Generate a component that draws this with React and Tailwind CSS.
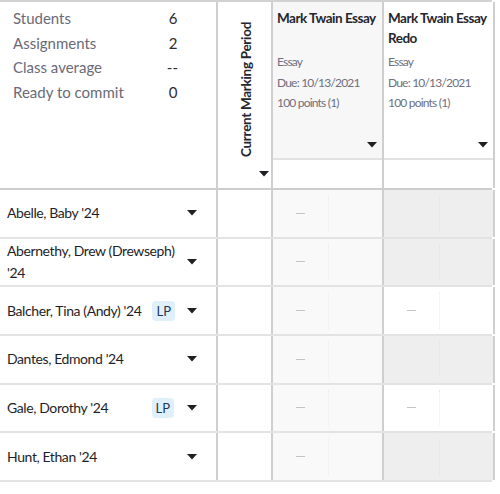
import React from "react";

const Caret = ({ className = "" }) => (
  <svg width="10" height="6" viewBox="0 0 10 6" className={className}>
    <path d="M0 0h10L5 5.5z" fill="#1f1f24" />
  </svg>
);

const students = [
  { name: ["Abelle, Baby '24"], second: "gray" },
  { name: ["Abernethy, Drew (Drewseph)", "'24"], second: "gray" },
  { name: ["Balcher, Tina (Andy) '24"], lp: true, second: "white" },
  { name: ["Dantes, Edmond '24"], second: "gray" },
  { name: ["Gale, Dorothy '24"], lp: true, lpFar: true, second: "white" },
  { name: ["Hunt, Ethan '24"], second: "gray" },
];

const stats = [
  ["Students", "6"],
  ["Assignments", "2"],
  ["Class average", "--"],
  ["Ready to commit", "0"],
];

function GradeCell({ bg, dash }) {
  return (
    <div className={`w-[111px] shrink-0 border-r-2 border-[#cfcfcf] flex ${bg}`}>
      <div className="w-[55px] flex items-center justify-center">
        {dash && <div className="w-[9px] h-px bg-[#c4c4c4]"></div>}
      </div>
      <div className="flex-1 py-[5px]">
        <div className={`h-full border-l border-dotted ${bg === "bg-[#eeeeee]" ? "border-[#e4e4e4]" : "border-[#ececec]"}`}></div>
      </div>
    </div>
  );
}

export default function App() {
  return (
    <div className="w-[500px] h-[494px] bg-white font-['Lato',sans-serif] text-[#3a3a48]">
      <div className="w-[492px] border-t-2 border-[#d2d2d2]">
        {/* Header */}
        <div className="flex h-[188px] border-b-2 border-[#cdcdcd]">
          <div className="w-[218px] shrink-0 border-r-2 border-[#cfcfcf] pl-[13px] pr-[38px] pt-[4px]">
            {stats.map(([label, value]) => (
              <div key={label} className="flex justify-between h-[24.5px] items-center text-[15px] whitespace-nowrap">
                <span className="text-[#6a6a78]">{label}</span>
                <span className="text-[#2c2c34] min-w-[10px] text-center">{value}</span>
              </div>
            ))}
          </div>
          <div className="w-[55px] shrink-0 border-r-2 border-[#cfcfcf] relative">
            <div className="absolute left-[18px] top-[20px] h-[134px] flex items-center justify-center whitespace-nowrap [writing-mode:vertical-rl] rotate-180 text-[13.5px] tracking-[-0.3px] font-bold text-[#26262e]">
              Current Marking Period
            </div>
            <Caret className="absolute left-[41px] top-[169px]" />
          </div>
          {[["Mark Twain Essay"], ["Mark Twain Essay", "Redo"]].map((title, i) => (
            <div key={i} className="w-[111px] shrink-0 border-r-2 border-[#cfcfcf] flex flex-col">
              <div className={`h-[158px] border-b-2 border-[#e2e2e2] relative px-[4px] pt-[6px] ${i === 0 ? "bg-[#f7f7f7]" : "bg-white"}`}>
                <div className="text-[13.5px] tracking-[-0.5px] font-bold leading-[20px] text-[#26262e] whitespace-nowrap">
                  {title.map((t) => (
                    <div key={t}>{t}</div>
                  ))}
                </div>
                <div className="absolute left-[4px] top-[50px] text-[12px] tracking-[-0.8px] leading-[20.5px] text-[#6f6f80] whitespace-nowrap">
                  <div>Essay</div>
                  <div>Due: 10/13/2021</div>
                  <div>100 points (1)</div>
                </div>
                <Caret className="absolute right-[5px] bottom-[10px]" />
              </div>
              <div className="flex-1 bg-white"></div>
            </div>
          ))}
        </div>

        {/* Rows */}
        {students.map((s) => (
          <div key={s.name[0]} className="flex h-[48.67px] border-b-2 border-[#e3e3e3]">
            <div className="w-[218px] shrink-0 border-r-2 border-[#cfcfcf] flex items-center pl-[7px] pr-[19px]">
              <div className="flex-1 flex items-center text-[14px] tracking-[-0.4px] leading-[22px] text-[#1e1e28] whitespace-nowrap">
                <span>
                  {s.name.map((line) => (
                    <div key={line}>{line}</div>
                  ))}
                </span>
                {s.lp && !s.lpFar && (
                  <span className="ml-[11px] px-[4px] rounded bg-[#dff0fb] text-[#1d3a5a] text-[13px] tracking-normal leading-[20px]">LP</span>
                )}
                {s.lp && s.lpFar && (
                  <span className="ml-auto mr-[13px] px-[4px] rounded bg-[#dff0fb] text-[#1d3a5a] text-[13px] tracking-normal leading-[20px]">LP</span>
                )}
              </div>
              <Caret />
            </div>
            <div className="w-[55px] shrink-0 border-r-2 border-[#cfcfcf] bg-white"></div>
            <GradeCell bg="bg-[#f9f9f9]" dash />
            <GradeCell
              bg={s.second === "gray" ? "bg-[#eeeeee]" : "bg-white"}
              dash={s.second === "white"}
            />
          </div>
        ))}
      </div>
    </div>
  );
}
